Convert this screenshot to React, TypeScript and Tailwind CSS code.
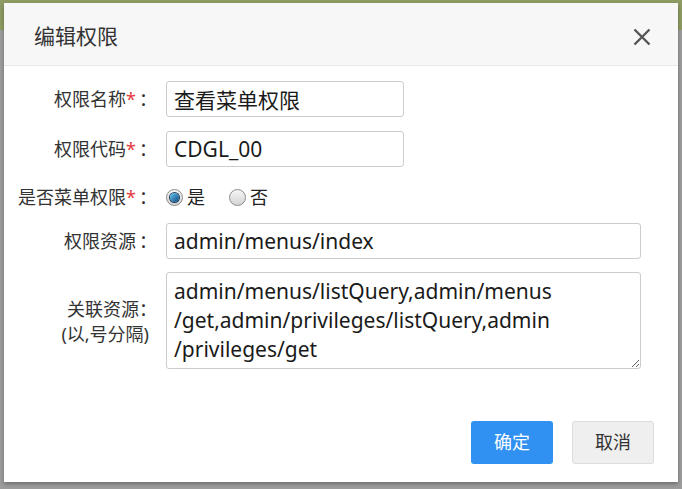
import React from 'react';

const font = 'font-["Noto_Sans","Noto_Sans_CJK_SC",sans-serif]';

const Label: React.FC<{ text: string; required?: boolean }> = ({ text, required }) => (
  <div className="w-[153px] shrink-0 text-right text-[18px] text-[#333]">
    {text}
    {required && <span className="text-[#e4393c]">*</span>}
    <span className="ml-[3px]">：</span>
  </div>
);

const Radio: React.FC<{ checked?: boolean; label: string }> = ({ checked, label }) => (
  <label className="flex items-center gap-[4px] text-[18px] text-[#222]">
    <span className="flex h-[17px] w-[17px] items-center justify-center rounded-full border border-[#8a8a8a] bg-gradient-to-b from-[#f6f6f6] to-[#d4d4d4]">
      {checked && (
        <span className="h-[9px] w-[9px] rounded-full bg-gradient-to-br from-[#6cc8f4] to-[#0a4a80] ring-1 ring-[#1b3c5c]" />
      )}
    </span>
    {label}
  </label>
);

// zero-width spaces give the browser a break chance before each slash
const related = 'admin/menus/listQuery,admin\u200B/menus\u200B/get,admin\u200B/privileges\u200B/listQuery,admin\u200B/privileges\u200B/get';

const inputClass = 'h-[36px] rounded-[3px] border border-[#ccc] px-[7px] text-[21px] text-[#1a1a1a] outline-none';

export default function App() {
  return (
    <div className={`relative h-[489px] w-[682px] overflow-hidden bg-[#9c9c9c] ${font}`}>
      <div className="pointer-events-none absolute left-0 top-0 h-[30px] w-full bg-[#8e9b63]" />
      <div className="absolute left-[4px] top-[3px] flex h-[479px] w-[674px] flex-col bg-white shadow-[0_2px_4px_rgba(0,0,0,0.3)]">
        <div className="flex h-[63px] shrink-0 items-center justify-between border-b border-[#e8e8e8] bg-[#f7f7f7] pl-[30px] pr-[27px] pt-[6px]">
          <span className="text-[21px] text-[#333]">编辑权限</span>
          <svg width="18" height="18" viewBox="0 0 18 18" className="text-[#555]">
            <path d="M1.5 1.5L16.5 16.5M16.5 1.5L1.5 16.5" stroke="currentColor" strokeWidth="2.4" />
          </svg>
        </div>

        <div className="flex flex-col gap-[14px] pr-[37px] pt-[15px]">
          <div className="flex items-center gap-[9px]">
            <Label text="权限名称" required />
            <input defaultValue="查看菜单权限" className={`${inputClass} w-[238px]`} />
          </div>
          <div className="flex items-center gap-[9px]">
            <Label text="权限代码" required />
            <input defaultValue="CDGL_00" className={`${inputClass} w-[238px]`} />
          </div>
          <div className="flex h-[28px] items-center gap-[9px] pt-[4px]">
            <Label text="是否菜单权限" required />
            <div className="flex items-center gap-[24px]">
              <Radio checked label="是" />
              <Radio label="否" />
            </div>
          </div>
          <div className="flex items-center gap-[9px]">
            <Label text="权限资源" />
            <input defaultValue="admin/menus/index" className={`${inputClass} flex-1`} />
          </div>
          <div className="-mt-[1px] flex items-center gap-[9px]">
            <div className="w-[153px] shrink-0 pt-[2px] text-right text-[18px] leading-[25px] text-[#333]">
              <div>关联资源：</div>
              <div className="pr-[8px]">(以,号分隔)</div>
            </div>
            <textarea
              defaultValue={related}
              className="h-[97px] flex-1 resize-y rounded-[3px] border border-[#ccc] px-[7px] py-[4px] text-[21px] leading-[29px] text-[#1a1a1a] outline-none"
            />
          </div>
        </div>

        <div className="mt-auto flex justify-end gap-[19px] pb-[18px] pr-[24px]">
          <button className="h-[43px] w-[82px] rounded-[3px] bg-[#3091f2] text-[18px] text-white">确定</button>
          <button className="h-[43px] w-[82px] rounded-[3px] border border-[#dcdcdc] bg-[#efefef] text-[18px] text-[#333]">
            取消
          </button>
        </div>
      </div>
    </div>
  );
}
